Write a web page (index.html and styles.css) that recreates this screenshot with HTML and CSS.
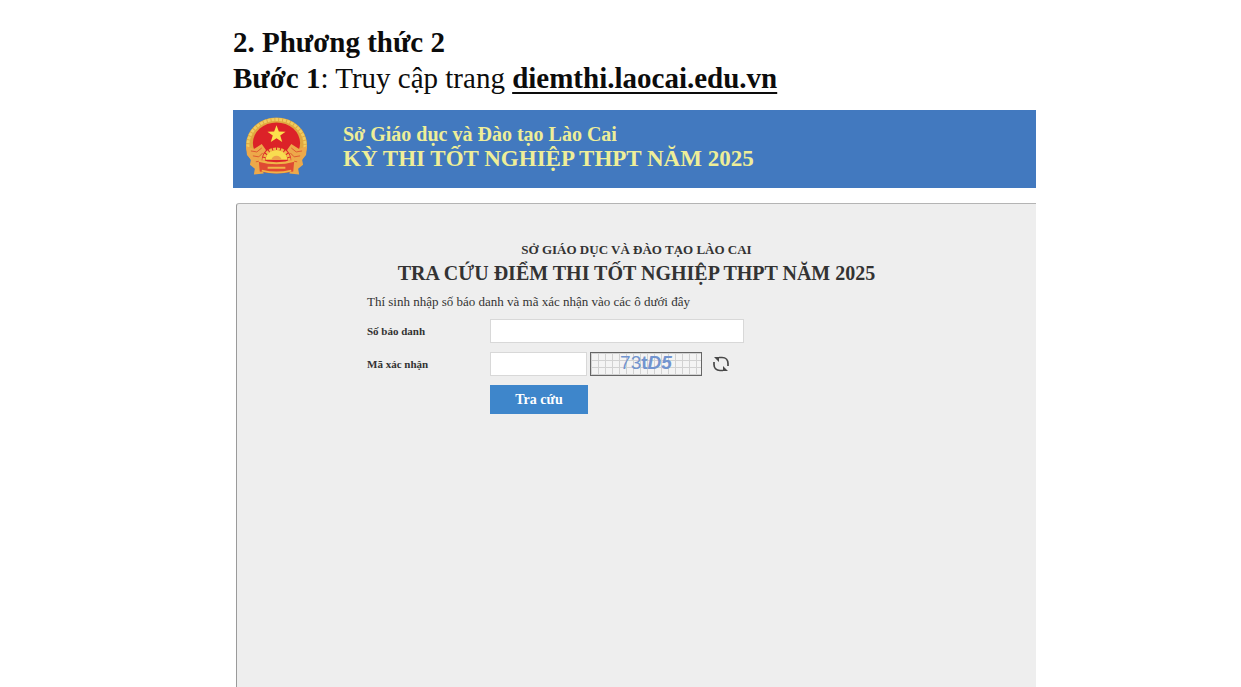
FILE: index.html
```
<!DOCTYPE html>
<html lang="vi">

<head>
    <meta charset="UTF-8">
    <meta name="viewport" content="width=device-width, initial-scale=1.0">
    <title>Tra cứu điểm thi tốt nghiệp THPT năm 2025</title>
    <link rel="stylesheet" href="styles.css">
</head>

<body>
    <main class="page">
        <section class="guide">
            <h1>2. Phương thức 2</h1>
            <p><b>Bước 1</b>: Truy cập trang <a href="http://diemthi.laocai.edu.vn">diemthi.laocai.edu.vn</a></p>
        </section>

        <header class="banner">
            <svg class="emblem" viewBox="0 0 64 60" aria-hidden="true">
                <!-- rice wreath -->
                <ellipse cx="32" cy="28" rx="31" ry="28" fill="#e0a840"/>
                <ellipse cx="32" cy="28" rx="29" ry="26" fill="none" stroke="#f0cd60" stroke-width="3" stroke-dasharray="3 1"/>
                <ellipse cx="32" cy="26" rx="24" ry="21" fill="#dc2228"/>
                <path d="M32 8l2.400 6.200 6.800.2-5.400 4 2 6.400-5.800-3.800-5.800 3.800 2-6.400-5.400-4 6.800-.2z" fill="#fbe04c"/>
                <!-- ribbons on both sides -->
                <path d="M1 29l8 3 8-5 5 7-4 7 4 4-5 5 2 7-10 1 1-6-5-4 1-5-4-5z" fill="#eda94a"/>
                <path d="M63 29l-8 3-8-5-5 7 4 7-4 4 5 5-2 7 10 1-1-6 5-4-1-5 4-5z" fill="#eda94a"/>
                <path d="M6 34l6 1 5-4M8 39l6 1 4-4M11 45l7-1M58 34l-6 1-5-4M56 39l-6 1-4-4M53 45l-7-1" fill="none" stroke="#dd5a30" stroke-width="1"/>
                <!-- cogwheel -->
                <path d="M17 44a15 15 0 0 1 30 0z" fill="#dc2228"/>
                <path d="M19 44a13 12 0 0 1 26 0" fill="none" stroke="#f0b848" stroke-width="3" stroke-dasharray="3 1"/>
                <path d="M21 43a11 10 0 0 1 22 0z" fill="#f8dc50"/>
                <path d="M27 43a5 4 0 0 1 10 0z" fill="#eda04a"/>
                <path d="M14 44q18 5 36 0l-1 11q-17 4-34 0z" fill="#df4a32"/>
                <path d="M14 44q18 5 36 0M17 54q15 4 30 0M23 51h18" fill="none" stroke="#f0b348" stroke-width="2"/>
            </svg>
            <div class="banner-text">
                <p class="office">Sở Giáo dục và Đào tạo Lào Cai</p>
                <p class="exam">KỲ THI TỐT NGHIỆP THPT NĂM 2025</p>
            </div>
        </header>

        <section class="panel">
            <p class="panel-office">SỞ GIÁO DỤC VÀ ĐÀO TẠO LÀO CAI</p>
            <h2>TRA CỨU ĐIỂM THI TỐT NGHIỆP THPT NĂM 2025</h2>

            <form class="lookup">
                <p class="hint">Thí sinh nhập số báo danh và mã xác nhận vào các ô dưới đây</p>

                <label for="candidate">Số báo danh</label>
                <input id="candidate" class="candidate" type="text">

                <label for="code">Mã xác nhận</label>
                <div class="code-row">
                    <input id="code" class="code" type="text">
                    <span class="captcha"><span class="upright">73<b>t</b></span>D5</span>
                    <button class="refresh" type="button" aria-label="Đổi mã">
                        <svg viewBox="0 0 18 18" aria-hidden="true">
                            <path d="M7 2.500H10C14 2.500 16 5.500 16 8.500V11M11 15.500H8C4 15.500 2 12.500 2 9.500V7" fill="none" stroke="#484848" stroke-width="1.700"/>
                            <path d="M2 2h5v5zM16 16h-5v-5z" fill="#484848"/>
                        </svg>
                    </button>
                </div>

                <button class="submit" type="submit">Tra cứu</button>
            </form>
        </section>
    </main>
</body>

</html>
```
FILE: styles.css
```
* {
    box-sizing: border-box;
}

body {
    margin: 0;
    background-color: #ffffff;
    color: #333333;
    font-family: "Liberation Serif", "Times New Roman", serif;
}

h1,
h2,
p {
    margin: 0;
}

.page {
    display: flex;
    flex-direction: column;
    min-height: 100vh;
    padding: 24px 205px 0 233px;
}

.guide {
    margin-bottom: 14px;
    color: #0c0c0c;
    font-size: 29px;
    line-height: 36px;
}

.guide h1 {
    font-size: 29px;
}

.guide a {
    color: inherit;
    font-weight: bold;
    text-decoration-thickness: 2px;
    text-underline-offset: 4px;
    text-decoration-skip-ink: none;
}

.banner {
    display: flex;
    align-items: center;
    gap: 35px;
    min-height: 78px;
    padding: 0 12px 4px;
    background-color: #4279bf;
    color: #eeee98;
    font-weight: bold;
}

.emblem {
    flex: none;
    width: 63px;
    height: 60px;
}

.office {
    font-size: 20px;
    line-height: 24px;
}

.exam {
    font-size: 23px;
    line-height: 26px;
}

.panel {
    flex: 1;
    margin: 15px 0 0 3px;
    padding: 37px 0 24px;
    border-top: 1px solid #b4b4b4;
    border-left: 1px solid #9a9a9a;
    border-top-left-radius: 3px;
    background-color: #eeeeee;
    text-align: center;
}

.panel-office {
    font-size: 13px;
    font-weight: bold;
    line-height: 18px;
}

.panel h2 {
    font-size: 20px;
    line-height: 28px;
}

.lookup {
    display: grid;
    grid-template-columns: 123px 1fr;
    row-gap: 9px;
    align-items: center;
    padding: 7px 24px 0 130px;
    text-align: left;
}

.hint {
    grid-column: 1 / -1;
    font-size: 13px;
    line-height: 16px;
}

.lookup label {
    font-size: 11px;
    font-weight: bold;
}

.lookup input {
    height: 24px;
    padding: 2px 6px;
    border: 1px solid #d8d8d8;
    background-color: #ffffff;
    font: inherit;
    font-size: 14px;
}

.candidate {
    width: 254px;
}

.code-row {
    display: flex;
    align-items: center;
}

.code {
    width: 97px;
}

.captcha {
    width: 112px;
    height: 24px;
    margin-left: 3px;
    border: 1px solid #666666;
    background-color: #f4f4f4;
    background-image:
        linear-gradient(90deg, #d2d2d2 1px, transparent 1px),
        linear-gradient(#d2d2d2 1px, transparent 1px);
    background-size: 7px 7px;
    color: #7294cf;
    font-family: "Liberation Sans", Arial, sans-serif;
    font-size: 19px;
    font-style: italic;
    font-weight: bold;
    line-height: 20px;
    text-align: center;
}

.upright {
    font-style: normal;
    font-weight: normal;
}

.refresh {
    width: 18px;
    height: 18px;
    margin-left: 10px;
    padding: 0;
    border: none;
    background: none;
    cursor: pointer;
}

.refresh svg {
    display: block;
}

.submit {
    grid-column: 2;
    width: 98px;
    height: 29px;
    border: none;
    background-color: #3e86cb;
    color: #ffffff;
    font: inherit;
    font-size: 14px;
    font-weight: bold;
    cursor: pointer;
}
```
